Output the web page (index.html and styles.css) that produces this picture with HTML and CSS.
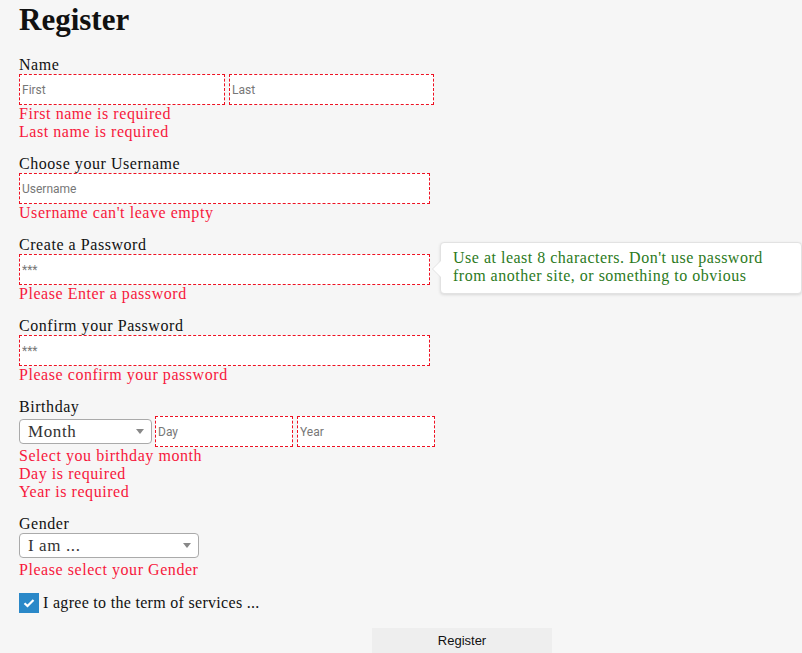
FILE: index.html
```html
<!DOCTYPE html>
<html>
<head>
<meta charset="utf-8">
<link rel="stylesheet" href="styles.css">
</head>
<body>
<div class="page">
  <h1 class="title">Register</h1>

  <div class="group">
    <div class="label">Name</div>
    <div class="row">
      <input class="field w206" placeholder="First">
      <input class="field w205" placeholder="Last">
    </div>
    <div class="err">First name is required</div>
    <div class="err">Last name is required</div>
  </div>

  <div class="group">
    <div class="label">Choose your Username</div>
    <div class="row">
      <input class="field w411" placeholder="Username">
    </div>
    <div class="err">Username can't leave empty</div>
  </div>

  <div class="group pw">
    <div class="label">Create a Password</div>
    <div class="row">
      <input class="field w411" placeholder="***">
    </div>
    <div class="err">Please Enter a password</div>
    <div class="tip">Use at least 8 characters. Don't use password from another site, or something to obvious</div>
  </div>

  <div class="group">
    <div class="label">Confirm your Password</div>
    <div class="row">
      <input class="field w411" placeholder="***">
    </div>
    <div class="err">Please confirm your password</div>
  </div>

  <div class="group">
    <div class="label">Birthday</div>
    <div class="row center">
      <div class="sel w133"><span>Month</span><i class="arrow"></i></div>
      <input class="field w138 first" placeholder="Day">
      <input class="field w138" placeholder="Year">
    </div>
    <div class="err">Select you birthday month</div>
    <div class="err">Day is required</div>
    <div class="err">Year is required</div>
  </div>

  <div class="group">
    <div class="label">Gender</div>
    <div class="row gender">
      <div class="sel w180"><span>I am ...</span><i class="arrow"></i></div>
    </div>
    <div class="err">Please select your Gender</div>
  </div>

  <div class="agree">
    <span class="check"><svg width="12" height="10" viewBox="0 0 12 10"><path d="M1.5 5.2 L4.5 8 L10.5 2" fill="none" stroke="#fff" stroke-width="2.2"/></svg></span>
    <span class="agree-text">I agree to the term of services ...</span>
  </div>

  <div class="actions">
    <button class="btn">Register</button>
  </div>
</div>
</body>
</html>
```

FILE: styles.css
```css
html, body {
  margin: 0;
  padding: 0;
  background: #f6f6f6;
}
body {
  font-family: "Liberation Serif", "DejaVu Serif", serif;
  color: #111;
}
.page {
  padding: 0 19px;
  width: 764px;
}
.title {
  margin: 0;
  padding-top: 3px;
  font-size: 31px;
  line-height: 34px;
  font-weight: bold;
  height: 52px;
}
.group {
  margin-bottom: 13px;
}
.pw {
  position: relative;
}
.label {
  font-size: 16px;
  letter-spacing: 0.55px;
  line-height: 18px;
  height: 18px;
  padding-top: 1px;
}
.row {
  display: flex;
  gap: 4px;
}
.row.center {
  align-items: center;
  gap: 4px;
}
.row.center .first {
  margin-left: -1px;
}
.row.gender {
  margin-bottom: 3px;
}
.field {
  box-sizing: border-box;
  height: 31px;
  border: 1px dashed #ee1122;
  background: #fff;
  margin: 0;
  padding: 0 2px;
  font-family: "Roboto", "Liberation Sans", sans-serif;
  font-size: 12px;
  color: #333;
  outline: none;
}
.field::placeholder {
  color: #777;
}
.w206 { width: 206px; }
.w205 { width: 205px; }
.w411 { width: 411px; }
.w138 { width: 138px; }
.w133 { width: 133px; }
.w180 { width: 180px; }
.sel {
  box-sizing: border-box;
  height: 25px;
  border: 1px solid #aaa;
  border-radius: 4px;
  background: #fff;
  display: flex;
  align-items: center;
  justify-content: space-between;
  padding: 0 7px 0 8px;
  font-size: 17px;
  letter-spacing: 0.6px;
  color: #333;
}
.arrow {
  width: 0;
  height: 0;
  border-left: 4px solid transparent;
  border-right: 4px solid transparent;
  border-top: 5px solid #888;
}
.err {
  color: #f7183c;
  font-size: 16px;
  letter-spacing: 0.55px;
  line-height: 18px;
}
.tip {
  position: absolute;
  left: 421px;
  top: 7px;
  width: 362px;
  box-sizing: border-box;
  padding: 6px 10px 8px 12px;
  background: #fff;
  border: 1px solid #e2e2e2;
  border-radius: 4px;
  box-shadow: 0 1px 3px rgba(0,0,0,0.12);
  color: #2c7a1c;
  font-size: 16px;
  letter-spacing: 0.5px;
  line-height: 18px;
}
.tip::before {
  content: "";
  position: absolute;
  left: -9px;
  top: 17px;
  width: 0;
  height: 0;
  border-top: 9px solid transparent;
  border-bottom: 9px solid transparent;
  border-right: 9px solid #e2e2e2;
}
.tip::after {
  content: "";
  position: absolute;
  left: -8px;
  top: 18px;
  width: 0;
  height: 0;
  border-top: 8px solid transparent;
  border-bottom: 8px solid transparent;
  border-right: 8px solid #fff;
}
.agree {
  display: flex;
  align-items: center;
  gap: 4px;
  margin-top: 14px;
  height: 20px;
}
.check {
  width: 20px;
  height: 20px;
  background: #2a88c8;
  display: flex;
  align-items: center;
  justify-content: center;
}
.agree-text {
  font-size: 16px;
  letter-spacing: 0.3px;
  line-height: 18px;
}
.actions {
  display: flex;
  margin-top: 15px;
  padding-left: 353px;
}
.btn {
  box-sizing: border-box;
  width: 180px;
  height: 40px;
  padding: 0 0 16px 0;
  border: none;
  background: #eeeeee;
  font-family: "Liberation Sans", Arial, sans-serif;
  font-size: 13px;
  line-height: 15px;
  color: #111;
}
```
